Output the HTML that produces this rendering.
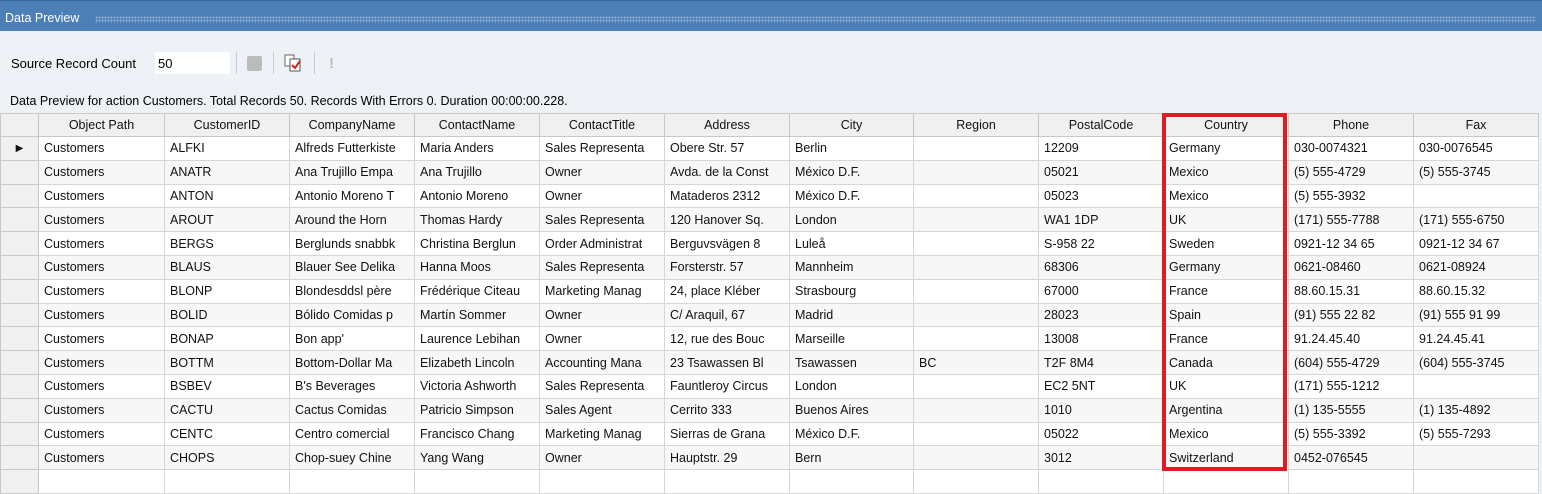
<!DOCTYPE html>
<html><head><meta charset="utf-8"><style>
*{margin:0;padding:0;box-sizing:border-box}
body{width:1542px;height:473px;overflow:hidden;background:#eef2f7;font-family:"Liberation Sans",sans-serif;font-size:13px;color:#000;position:relative}
.title{position:absolute;left:0;top:0;width:1542px;height:31px;background:#4d7fb7;border-top:1px solid #3a6aa0}
.title span{position:absolute;left:5px;top:10px;color:#fff;font-size:12.5px}
.title i{position:absolute;left:95px;right:6px;top:15px;height:7px;background-image:radial-gradient(#9ab8dc 0.8px,transparent 1px);background-size:3px 3px}
.lbl{position:absolute;left:11px;top:56px}
.inp{position:absolute;left:155px;top:52px;width:75px;height:22px;background:#fff;padding:4px 3px}
.sep{position:absolute;top:52px;width:1px;height:22px;background:#c8ccd2}
.stat{position:absolute;left:10px;top:94px;font-size:12.5px}
table{position:absolute;left:0;top:113px;border-collapse:collapse;table-layout:fixed;background:#fff}
td,th{height:23.8px;border:1px solid #d6d6d6;white-space:nowrap;overflow:hidden;padding:0 5px;font-weight:normal;text-align:left;font-size:12.5px;color:#111}
th{background:#f0f0f0;text-align:center;height:23px;border-color:#c8c8c8}
td.rh{background:#f0f0f0;padding:0;border-color:#c8c8c8}
tr:nth-child(odd) td{background:#f7f7f7}
tr:nth-child(odd) td.rh,tr td.rh{background:#f0f0f0}
tr.sel td:not(.rh){border-top:1px dotted #333;border-bottom:1px dotted #333}
.red{position:absolute;left:1162px;top:113px;width:125px;height:358px;border:4px solid #e11b22}
</style></head><body>
<div class="title"><span>Data Preview</span><i></i></div>
<div class="lbl">Source Record Count</div>
<div class="inp">50</div>
<div class="sep" style="left:236px"></div>
<div style="position:absolute;left:247px;top:56px;width:15px;height:15px;background:#bbb;border-radius:2px"></div>
<div class="sep" style="left:273px"></div>
<svg style="position:absolute;left:283px;top:52px" width="22" height="22" viewBox="0 0 22 22"><rect x="2" y="3" width="9" height="11" fill="#fff" stroke="#666"/><rect x="7" y="7" width="10" height="12" fill="#fff" stroke="#555"/><path d="M9 13l3 3 5-7" stroke="#d02020" stroke-width="2" fill="none"/></svg>
<div class="sep" style="left:314px"></div>
<div style="position:absolute;left:329px;top:55px;color:#bbb;font-weight:bold;font-size:15px">!</div>
<div class="stat">Data Preview for action Customers. Total Records 50. Records With Errors 0. Duration 00:00:00.228.</div>
<table>
<colgroup><col style="width:38px"><col style="width:126px"><col style="width:125px"><col style="width:125px"><col style="width:125px"><col style="width:125px"><col style="width:125px"><col style="width:124px"><col style="width:125px"><col style="width:125px"><col style="width:125px"><col style="width:125px"><col style="width:125px"></colgroup>
<tr><th></th><th>Object Path</th><th>CustomerID</th><th>CompanyName</th><th>ContactName</th><th>ContactTitle</th><th>Address</th><th>City</th><th>Region</th><th>PostalCode</th><th>Country</th><th>Phone</th><th>Fax</th></tr>
<tr class="sel"><td class="rh" style="text-align:center;font-size:10px">▶</td><td>Customers</td><td>ALFKI</td><td>Alfreds Futterkiste</td><td>Maria Anders</td><td>Sales Representa</td><td>Obere Str. 57</td><td>Berlin</td><td></td><td>12209</td><td>Germany</td><td>030-0074321</td><td>030-0076545</td></tr>
<tr><td class="rh"></td><td>Customers</td><td>ANATR</td><td>Ana Trujillo Empa</td><td>Ana Trujillo</td><td>Owner</td><td>Avda. de la Const</td><td>México D.F.</td><td></td><td>05021</td><td>Mexico</td><td>(5) 555-4729</td><td>(5) 555-3745</td></tr>
<tr><td class="rh"></td><td>Customers</td><td>ANTON</td><td>Antonio Moreno T</td><td>Antonio Moreno</td><td>Owner</td><td>Mataderos  2312</td><td>México D.F.</td><td></td><td>05023</td><td>Mexico</td><td>(5) 555-3932</td><td></td></tr>
<tr><td class="rh"></td><td>Customers</td><td>AROUT</td><td>Around the Horn</td><td>Thomas Hardy</td><td>Sales Representa</td><td>120 Hanover Sq.</td><td>London</td><td></td><td>WA1 1DP</td><td>UK</td><td>(171) 555-7788</td><td>(171) 555-6750</td></tr>
<tr><td class="rh"></td><td>Customers</td><td>BERGS</td><td>Berglunds snabbk</td><td>Christina Berglun</td><td>Order Administrat</td><td>Berguvsvägen  8</td><td>Luleå</td><td></td><td>S-958 22</td><td>Sweden</td><td>0921-12 34 65</td><td>0921-12 34 67</td></tr>
<tr><td class="rh"></td><td>Customers</td><td>BLAUS</td><td>Blauer See Delika</td><td>Hanna Moos</td><td>Sales Representa</td><td>Forsterstr. 57</td><td>Mannheim</td><td></td><td>68306</td><td>Germany</td><td>0621-08460</td><td>0621-08924</td></tr>
<tr><td class="rh"></td><td>Customers</td><td>BLONP</td><td>Blondesddsl père</td><td>Frédérique Citeau</td><td>Marketing Manag</td><td>24, place Kléber</td><td>Strasbourg</td><td></td><td>67000</td><td>France</td><td>88.60.15.31</td><td>88.60.15.32</td></tr>
<tr><td class="rh"></td><td>Customers</td><td>BOLID</td><td>Bólido Comidas p</td><td>Martín Sommer</td><td>Owner</td><td>C/ Araquil, 67</td><td>Madrid</td><td></td><td>28023</td><td>Spain</td><td>(91) 555 22 82</td><td>(91) 555 91 99</td></tr>
<tr><td class="rh"></td><td>Customers</td><td>BONAP</td><td>Bon app'</td><td>Laurence Lebihan</td><td>Owner</td><td>12, rue des Bouc</td><td>Marseille</td><td></td><td>13008</td><td>France</td><td>91.24.45.40</td><td>91.24.45.41</td></tr>
<tr><td class="rh"></td><td>Customers</td><td>BOTTM</td><td>Bottom-Dollar Ma</td><td>Elizabeth Lincoln</td><td>Accounting Mana</td><td>23 Tsawassen Bl</td><td>Tsawassen</td><td>BC</td><td>T2F 8M4</td><td>Canada</td><td>(604) 555-4729</td><td>(604) 555-3745</td></tr>
<tr><td class="rh"></td><td>Customers</td><td>BSBEV</td><td>B's Beverages</td><td>Victoria Ashworth</td><td>Sales Representa</td><td>Fauntleroy Circus</td><td>London</td><td></td><td>EC2 5NT</td><td>UK</td><td>(171) 555-1212</td><td></td></tr>
<tr><td class="rh"></td><td>Customers</td><td>CACTU</td><td>Cactus Comidas</td><td>Patricio Simpson</td><td>Sales Agent</td><td>Cerrito 333</td><td>Buenos Aires</td><td></td><td>1010</td><td>Argentina</td><td>(1) 135-5555</td><td>(1) 135-4892</td></tr>
<tr><td class="rh"></td><td>Customers</td><td>CENTC</td><td>Centro comercial</td><td>Francisco Chang</td><td>Marketing Manag</td><td>Sierras de Grana</td><td>México D.F.</td><td></td><td>05022</td><td>Mexico</td><td>(5) 555-3392</td><td>(5) 555-7293</td></tr>
<tr><td class="rh"></td><td>Customers</td><td>CHOPS</td><td>Chop-suey Chine</td><td>Yang Wang</td><td>Owner</td><td>Hauptstr. 29</td><td>Bern</td><td></td><td>3012</td><td>Switzerland</td><td>0452-076545</td><td></td></tr>
<tr><td class="rh"></td><td></td><td></td><td></td><td></td><td></td><td></td><td></td><td></td><td></td><td></td><td></td><td></td></tr>
</table>
<div class="red"></div>
</body></html>
